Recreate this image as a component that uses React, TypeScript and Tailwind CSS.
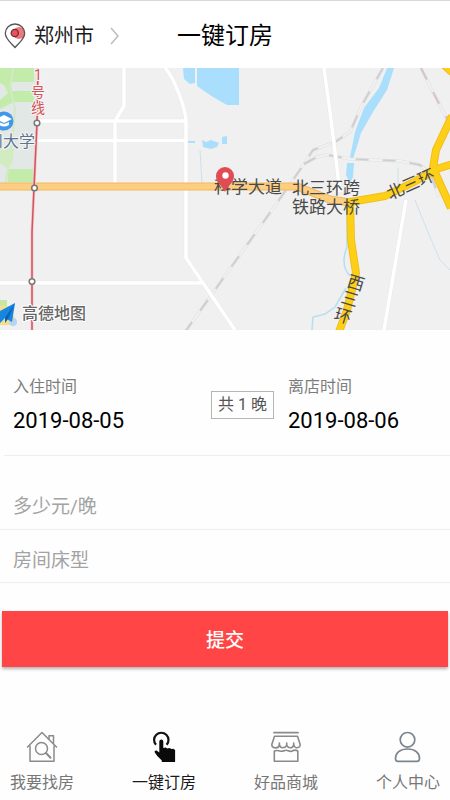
import React from "react";

const fontStack = "font-['Roboto','Noto_Sans_CJK_SC',sans-serif]";

function PinIcon() {
  return (
    <svg width="22" height="26" viewBox="0 0 22 26" fill="none" aria-hidden="true">
      <circle cx="15" cy="10" r="6" fill="#f0777b" />
      <path d="M11 24.5C8.5 21 1.3 16.500 1.300 10.200a9.700 9.200 0 0 1 19.400 0C20.700 16.500 13.500 21 11 24.500Z" stroke="#555" strokeWidth="1.300" />
      <circle cx="10.800" cy="10" r="3.600" fill="#e8545c" stroke="#702f35" strokeWidth="1.300" />
    </svg>
  );
}

function HouseIcon() {
  return (
    <svg width="32" height="32" viewBox="0 0 32 32" fill="none" stroke="#8a8a8a" strokeWidth="1.500" strokeLinejoin="round" strokeLinecap="round" aria-hidden="true">
      <path d="M1.500 16 16 1.500 30.500 16" />
      <path d="M4 15v15.300h24V15" />
      <path d="M23 8V4.700h4.500V12.500" />
      <circle cx="15.500" cy="17.500" r="6" />
      <path d="m20 22 4.500 4.800" strokeWidth="2" />
    </svg>
  );
}

function TapIcon() {
  return (
    <svg width="32" height="32" viewBox="0 0 32 32" fill="none" aria-hidden="true">
      <path d="M8 13.800a7.200 7.200 0 1 1 10.600 0" stroke="#111" strokeWidth="2.200" />
      <path d="M11.300 10.500a2 2 0 0 1 4 0V17l2.500-.5 1.500 1 2.500-.5 1.500 1 2-.3 1.800 1.300V31H13.800v-1.500L9.300 25 6.800 21.500c-.8-1.500 1-2.500 2.500-1.500l2 1.500Z" fill="#0a0a0a" />
    </svg>
  );
}

function ShopIcon() {
  return (
    <svg width="32" height="32" viewBox="0 0 32 32" fill="none" stroke="#8a8a8a" strokeWidth="1.600" strokeLinejoin="round" strokeLinecap="round" aria-hidden="true">
      <path d="M4 1.700h24" strokeWidth="1.800" />
      <path d="M4.500 5.300h23l2.700 8.200c0 2.500-2 3.600-4 3.200q-2-.5-2.500-2.700c-1 3.700-5.500 3.700-7 .3-2 3.400-6 3.400-7.300-.3-1 4.200-7.600 3.700-7.600-.5Z" />
      <path d="M9.400 14v-2M16.700 14v-2M23.700 14v-2" />
      <path d="M4.300 20v10.300h23.500V20c-2.300-1.300-4-1-5.500 0-2 1-3.500 0-5-.5-2-.8-3.500.8-5.500.8s-3.500-1.600-7.500-.3Z" />
    </svg>
  );
}

function PersonIcon() {
  return (
    <svg width="32" height="32" viewBox="0 0 32 32" fill="none" stroke="#7d858e" strokeWidth="1.700" aria-hidden="true">
      <circle cx="15.500" cy="8.800" r="7.300" />
      <path d="M3.500 27.500c0-5.500 4.500-9.500 12-9.500s12 4 12 9.500c0 2-.8 2.800-2.500 2.800H6C4.300 30.300 3.500 29.500 3.500 27.500Z" />
    </svg>
  );
}

function Railway({ d, color = "#cfcfcf" }: { d: string; color?: string }) {
  return (
    <>
      <path d={d} stroke="#e0e0e0" strokeWidth="3" />
      <path d={d} stroke="#f3f2f2" strokeWidth="1.800" />
      <path d={d} stroke={color} strokeWidth="2" strokeDasharray="13 14" />
    </>
  );
}

function CityMap() {
  return (
    <svg className="block h-[262px] w-full bg-[#f1f0f0]" viewBox="0 68 450 262" preserveAspectRatio="xMidYMid slice" fill="none" role="img" aria-label="地图">
      <path d="M0 68h36l-1 115H0Z" fill="#e1e8e6" />
      <path d="M0 68h34v14H11l1 9h22v11H14L0 109v-9l8-7-4-8-4-2ZM8 169h25v13H8Z" fill="#c3ecaa" />
      <path d="m13 68-3 20 5 20-3 35-6 39" stroke="#d3e8c9" strokeWidth="2" />
      <path d="M0 149h14l-2 14-4 6-8-6Z" fill="#d0ecc0" />

      <g fill="#a9defd">
        <path d="M183 68h12v15l-5 1-6-5ZM197 68h42v37h-12l-14-8-16-11Z" />
        <path d="m202 140 4 2 5-2 8 3-2 4-6 2-8-2ZM222 137l5-1v8h-5ZM188 141h7v2h-7Z" />
        <path d="M387 68h7l-7 22-14 22-12 21-8 26-3-2 5-25 9-24 15-20ZM347 163h7l-1 14-3 6-4-8Z" />
      </g>
      <path d="m200 150 2 33" stroke="#c9e2ef" />
      <path d="M347 205v42c-5 13-4 22 3 29M346 288l-11 19-10 7-12 3-1 13" stroke="#b3dff1" strokeWidth="1.500" />
      <path d="m415 200 12 30 13 30 10 10M398 168v18" stroke="#c9e2ef" />

      <Railway d="m383 68-21 37-12 27-15 10-22 8-9 14-25 36-94 132" />
      <Railway d="m304 164 13-7 10-2 23 4 50 2 20 4 10 8 9 24" />
      <Railway d="m421 68 12 24 14 27" color="#d8c3c5" />

      <g stroke="#e8e8e8" strokeWidth="4.500">
        <path d="M124 68v38l-9 15v64M37 121h149M37 140.500h149M165 68c10 10 21 43 21 53v137l49 72M0 283h202M324 68l6 44 10 80M406 200l-22 130" />
      </g>
      <g stroke="#ffffff" strokeWidth="3.500">
        <path d="M124 68v38l-9 15v64M37 121h149M37 140.500h149M165 68c10 10 21 43 21 53v137l49 72M0 283h202M324 68l6 44 10 80M406 200l-22 130" />
      </g>

      <path d="M0 186.500h297l33 13 20 3" stroke="#efb95f" strokeWidth="8" />
      <path d="M0 186.500h297l33 13 20 3" stroke="#fdce82" strokeWidth="6" />
      <g stroke="#f2bd20" strokeWidth="8" strokeLinejoin="round">
        <path d="M452 116l-16 34-3 18 18 40M433 170l20-6M434 171l-24 13-25 12-35 6 1 38 5 33-9 37-8 22M443 64l10 9" />
      </g>
      <g stroke="#fdd017" strokeWidth="6" strokeLinejoin="round">
        <path d="M452 116l-16 34-3 18 18 40M433 170l20-6M434 171l-24 13-25 12-35 6 1 38 5 33-9 37-8 22M443 64l10 9" />
      </g>

      <path d="m38 68-1 55-3 65-2 44v98" stroke="#f7c6ca" strokeWidth="3" />
      <path d="m38 68-1 55-3 65-2 44v98" stroke="#d1545f" strokeWidth="1.500" />
      <g fill="#ffffff" stroke="#777777" strokeWidth="1.500">
        <circle cx="37" cy="123" r="2.800" />
        <circle cx="34.500" cy="188" r="2.800" />
        <circle cx="32" cy="281.500" r="2.800" />
      </g>

      <circle cx="4" cy="121" r="9.500" fill="#4297e8" />
      <path d="m-4 119 8-4 8 4-8 4ZM-1 122v3q5 3 10 0v-3l-5 2Z" fill="#ffffff" />

      <g fontFamily="Roboto, 'Noto Sans CJK SC', sans-serif" fontSize="17" fill="#4a4a4a" stroke="#f7f5f0" strokeWidth="2" paintOrder="stroke">
        <text x="-13" y="147" fontSize="16" fill="#5a7594">州大学</text>
        <g fontSize="14" fill="#d3525e" textAnchor="middle">
          <text x="38" y="80">1</text>
          <text x="38" y="97">号</text>
          <text x="38" y="113">线</text>
        </g>
        <g stroke="none">
          <text x="214" y="193">科学大道</text>
          <text x="292" y="194">北三环跨</text>
          <text x="292" y="213">铁路大桥</text>
          <text x="390" y="200" transform="rotate(-24 390 200)">北三环</text>
          <g textAnchor="middle">
            <text x="356" y="289" transform="rotate(17 356 283)">西</text>
            <text x="350" y="305" transform="rotate(17 350 299)">三</text>
            <text x="343" y="322" transform="rotate(17 343 316)">环</text>
          </g>
        </g>
        <text x="22" y="319" fontSize="16" fontWeight="500" fill="#666666" stroke="#ffffff">高德地图</text>
      </g>

      <path d="M225 192c-1.500-5-9-9-9-16a9 9 0 0 1 18 0c0 7-7.500 11-9 16Z" fill="#e14b54" />
      <circle cx="225.500" cy="175.500" r="3.200" fill="#ffffff" />

      <path d="M0 300h7v7H0Z" fill="#c9e6a5" />
      <path d="M0 306h8l7 12-5 7H0Z" fill="#f4df8e" />
      <circle cx="13" cy="322" r="4" fill="#b9d3f0" />
      <path d="m15 303-3 19-7-4-5 5v-7l-2-4Z" fill="#1686e0" />
      <path d="m15 303-10 15v5l3-4Z" fill="#0b62b5" />
    </svg>
  );
}

function DateField({ id, label, value }: { id: string; label: string; value: string }) {
  return (
    <div className="flex min-w-0 flex-col gap-2">
      <label htmlFor={id} className="text-[16px] leading-6 text-[#7d7d7d]">{label}</label>
      <input id={id} type="text" readOnly defaultValue={value} className="h-7 w-full min-w-0 bg-transparent text-[22px] leading-7 text-black outline-none" />
    </div>
  );
}

const tabs = [
  { label: "我要找房", Icon: HouseIcon, active: false },
  { label: "一键订房", Icon: TapIcon, active: true },
  { label: "好品商城", Icon: ShopIcon, active: false },
  { label: "个人中心", Icon: PersonIcon, active: false },
];

export default function App() {
  return (
    <div lang="zh-CN" className={`flex min-h-screen flex-col bg-[#fefefe] ${fontStack}`}>
      <header className="grid h-[68px] grid-cols-[1fr_auto_1fr] items-center border-t border-[#d8d8d8] bg-white pt-0.5">
        <button type="button" className="flex items-center gap-2 pl-1 text-[20px] leading-7 text-[#1c1c1c]">
          <PinIcon />
          <span>郑州市</span>
          <svg className="ml-2" width="9" height="18" viewBox="0 0 9 18" fill="none" stroke="#bdbdbd" strokeWidth="1.500" aria-hidden="true">
            <path d="m1 1 7 8-7 8" />
          </svg>
        </button>
        <h1 className="text-[24px] leading-8 text-black">一键订房</h1>
      </header>

      <CityMap />

      <main>
        <form onSubmit={(e) => e.preventDefault()}>
          <div className="flex items-center pt-[45px] pb-5 pl-[13px]">
            <div className="w-[198px]">
              <DateField id="check-in" label="入住时间" value="2019-08-05" />
            </div>
            <div className="flex h-7 w-[63px] shrink-0 items-center justify-center border border-[#b5b5b5] text-[16px] text-[#555]">共 1 晚</div>
            <div className="min-w-0 flex-1 pl-[14px]">
              <DateField id="check-out" label="离店时间" value="2019-08-06" />
            </div>
          </div>
          <div className="ml-1 border-t border-[#eeeeee] pt-5">
            <input aria-label="多少元/晚" type="text" placeholder="多少元/晚" className="block h-[53px] w-full bg-transparent pt-2 pl-[9px] text-[19px] text-[#333] outline-none placeholder:text-[#a3a3a3]" />
          </div>
          <div className="border-y border-[#eeeeee]">
            <input aria-label="房间床型" type="text" placeholder="房间床型" className="block h-[52px] w-full bg-transparent pt-2 pl-[13px] text-[19px] text-[#333] outline-none placeholder:text-[#a3a3a3]" />
          </div>
          <div className="px-0.5 pt-7">
            <button type="submit" className="h-14 w-full bg-[#ff4545] pt-1 text-[19px] font-medium text-white shadow-[0_2px_3px_rgba(0,0,0,0.3)]">提交</button>
          </div>
        </form>
      </main>

      <nav className="mt-auto flex justify-between px-[10px] pb-[5px]">
        {tabs.map(({ label, Icon, active }) => (
          <a key={label} href="#" aria-current={active ? "page" : undefined} className={`flex flex-col items-center gap-2 text-[16px] leading-6 ${active ? "text-[#1a1a1a]" : "text-[#777777]"}`}>
            <Icon />
            <span>{label}</span>
          </a>
        ))}
      </nav>
    </div>
  );
}
